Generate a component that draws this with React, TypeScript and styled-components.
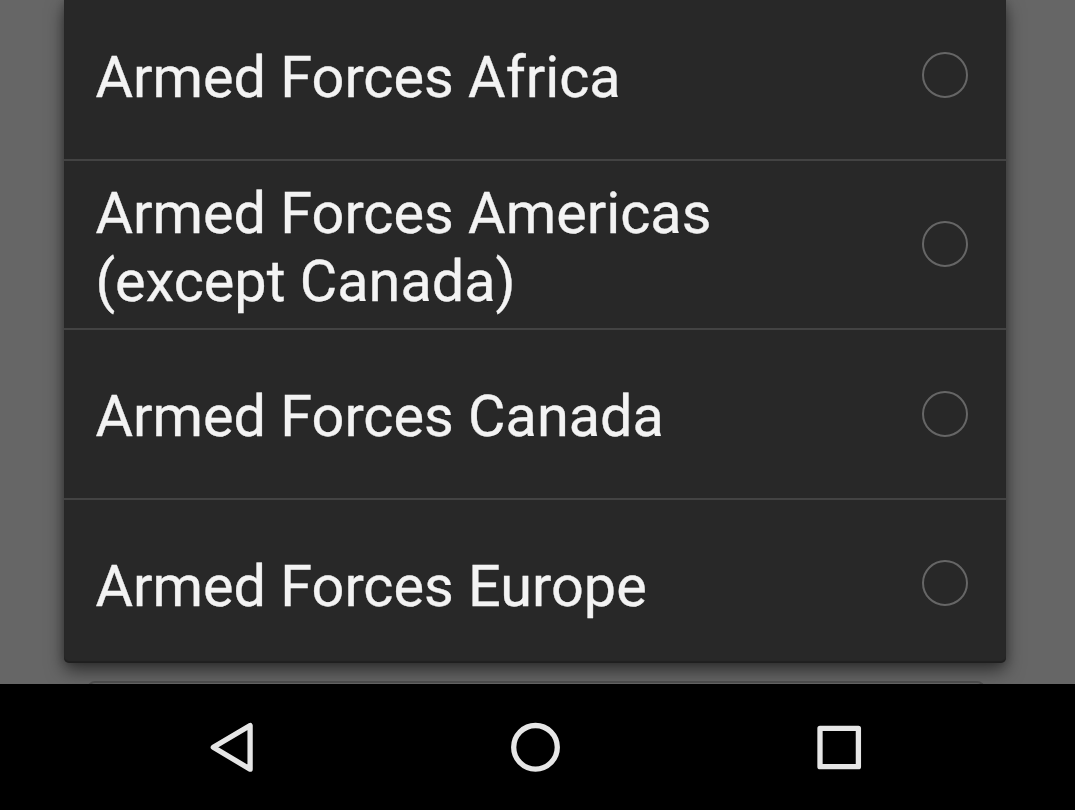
import React from "react";
import styled, { createGlobalStyle } from "styled-components";

const GlobalStyle = createGlobalStyle`
  * { box-sizing: border-box; }
  body { margin: 0; background: #666; }
`;

const Screen = styled.main`
  width: 1075px;
  height: 810px;
  display: flex;
  flex-direction: column;
  overflow: hidden;
  background: #666;
  font-family: Roboto, "Liberation Sans", sans-serif;
`;

const Content = styled.section`
  height: 684px;
  overflow: hidden;
`;

const Dialog = styled.ul`
  position: relative;
  width: 942px;
  height: 663px;
  margin: 0 0 0 64px;
  padding: 0;
  list-style: none;
  background: #282828;
  border-radius: 0 0 5px 5px;
  box-shadow: 0 8px 18px rgba(0, 0, 0, 0.52), 0 0 8px rgba(0, 0, 0, 0.2),
    inset 0 -2px 1px rgba(0, 0, 0, 0.22);
`;

const Option = styled.li<{ $height: number; $last?: boolean }>`
  height: ${(p) => p.$height}px;
  padding: 0 38px 0 31.4px;
  display: flex;
  justify-content: space-between;
  border-bottom: ${(p) => (p.$last ? "none" : "2px solid #434343")};
`;

const Label = styled.span<{ $top: number }>`
  padding-top: ${(p) => p.$top}px;
  font-size: 57.6px;
  line-height: 68px;
  color: #f3f3f3;
  -webkit-text-stroke: 0.35px #f3f3f3;
  white-space: pre-line;
`;

const Radio = styled.span<{ $top: number }>`
  width: 46px;
  height: 46px;
  margin-top: ${(p) => p.$top}px;
  flex: none;
  border: 2px solid #666;
  border-radius: 50%;
`;

const FieldBelow = styled.div`
  width: 898px;
  height: 40px;
  margin: 18px 0 0 87px;
  border: 2px solid #505050;
  border-radius: 8px;
`;

const NavBar = styled.nav`
  height: 126px;
  display: flex;
  background: #000;
`;

const NavIcon = styled.svg`
  display: block;
  width: 60px;
  height: 60px;
  fill: none;
  stroke: #e6e6e6;
  stroke-width: 5.3;
  stroke-linejoin: round;
`;

const NavButton = styled.button<{ $gap: number }>`
  width: 60px;
  height: 60px;
  margin: 33px 0 0 ${(p) => p.$gap}px;
  padding: 0;
  border: 0;
  background: none;
`;

const options = [
  { text: "Armed Forces Africa", height: 161, labelTop: 44, radioTop: 52 },
  { text: "Armed Forces Americas\n(except Canada)", height: 169, labelTop: 19, radioTop: 60.4 },
  { text: "Armed Forces Canada", height: 170, labelTop: 53, radioTop: 61 },
  { text: "Armed Forces Europe", height: 163, labelTop: 53, radioTop: 60.4 },
];

export default function App() {
  return (
    <Screen>
      <GlobalStyle />
      <Content>
        <Dialog role="radiogroup">
          {options.map((o, i) => (
            <Option key={o.text} $height={o.height} $last={i === options.length - 1}>
              <Label $top={o.labelTop}>{o.text}</Label>
              <Radio $top={o.radioTop} role="radio" aria-checked="false" aria-label={o.text} />
            </Option>
          ))}
        </Dialog>
        <FieldBelow />
      </Content>
      <NavBar>
        <NavButton $gap={202} aria-label="Back">
          <NavIcon viewBox="0 0 60 60"><path d="M11.3 30.3 48.1 8.5V52.2Z" /></NavIcon>
        </NavButton>
        <NavButton $gap={243} aria-label="Home">
          <NavIcon viewBox="0 0 60 60"><circle cx="30.5" cy="30.3" r="21.8" /></NavIcon>
        </NavButton>
        <NavButton $gap={244} aria-label="Overview">
          <NavIcon viewBox="0 0 60 60"><rect x="11" y="11.3" width="38.4" height="38.4" /></NavIcon>
        </NavButton>
      </NavBar>
    </Screen>
  );
}
